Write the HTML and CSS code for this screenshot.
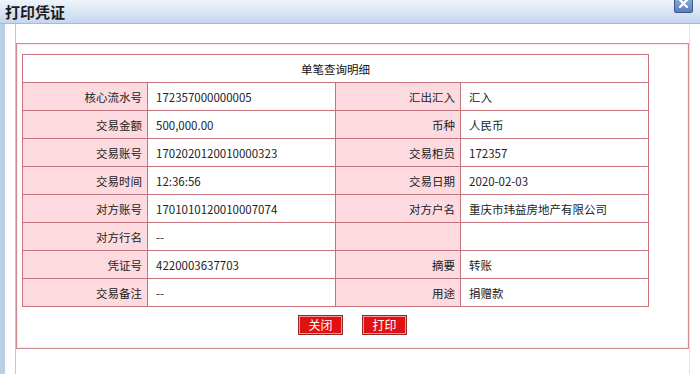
FILE: index.html
```html
<!DOCTYPE html>
<html lang="zh-CN">
<head>
    <meta charset="UTF-8">
    <title>打印凭证</title>
    <link rel="stylesheet" href="styles.css">
</head>
<body>
    <div class="dialog">
        <div class="titlebar">
            <span class="title">打印凭证</span>
            <span class="close-btn">
                <svg width="9" height="9" viewBox="0 0 9 9"><path d="M1 1L8 8M8 1L1 8" stroke="#fff" stroke-width="2.2" stroke-linecap="square"/></svg>
            </span>
        </div>
        <div class="main">
            <div class="side"></div>
            <div class="content">
                <div class="frame">
                    <div class="box">
                        <table class="detail">
                            <colgroup>
                                <col class="c-label"><col class="c-value"><col class="c-label"><col class="c-value">
                            </colgroup>
                            <tr><td colspan="4" class="head">单笔查询明细</td></tr>
                            <tr><td class="label">核心流水号</td><td>172357000000005</td><td class="label">汇出汇入</td><td>汇入</td></tr>
                            <tr><td class="label">交易金额</td><td>500,000.00</td><td class="label">币种</td><td>人民币</td></tr>
                            <tr><td class="label">交易账号</td><td>1702020120010000323</td><td class="label">交易柜员</td><td>172357</td></tr>
                            <tr><td class="label">交易时间</td><td>12:36:56</td><td class="label">交易日期</td><td>2020-02-03</td></tr>
                            <tr><td class="label">对方账号</td><td>1701010120010007074</td><td class="label">对方户名</td><td>重庆市玮益房地产有限公司</td></tr>
                            <tr><td class="label">对方行名</td><td>--</td><td class="label"></td><td></td></tr>
                            <tr><td class="label">凭证号</td><td>4220003637703</td><td class="label">摘要</td><td>转账</td></tr>
                            <tr><td class="label">交易备注</td><td>--</td><td class="label">用途</td><td>捐赠款</td></tr>
                        </table>
                        <div class="actions">
                            <button class="btn">关闭</button>
                            <button class="btn">打印</button>
                        </div>
                    </div>
                </div>
            </div>
        </div>
    </div>
</body>
</html>
```

FILE: styles.css
```css
body {
    margin: 0;
    background: #fff;
    font-family: 'Noto Sans CJK SC', 'Noto Sans', sans-serif;
    font-size: 11.5px;
    color: #222;
}

.dialog {
    width: 700px;
    height: 374px;
    overflow: hidden;
    display: flex;
    flex-direction: column;
}

.titlebar {
    height: 23px;
    border-bottom: 1px solid #a3bad8;
    background: linear-gradient(to bottom, #eef4fb, #dbe6f4 50%, #c4d6ee);
    display: flex;
    justify-content: space-between;
    align-items: center;
    padding: 0 7px 0 5px;
}

.title {
    font-size: 15px;
    font-weight: bold;
    color: #1b1b1b;
}

.close-btn {
    align-self: flex-start;
    width: 19px;
    height: 19px;
    margin-top: -6px;
    border: 1px solid #3b5a8c;
    border-radius: 2px;
    background: linear-gradient(to bottom, #9bb5de, #5b7fbd);
    display: flex;
    justify-content: center;
    align-items: flex-end;
    padding-bottom: 4px;
    box-sizing: border-box;
}

.main {
    flex: 1;
    display: flex;
}

.side {
    width: 5px;
    background: #bacee7;
}

.content {
    flex: 1;
    padding-left: 10px;
    padding-right: 10px;
}

.frame {
    height: 100%;
    border-left: 1px solid #c9c9c9;
    border-right: 1px solid #e2e2e2;
    padding-top: 19px;
}

.box {
    border: 1px solid #cf8d93;
    box-shadow: inset 0 0 0 1px #fbeaec;
    padding: 10px 0 13px 5px;
}

.detail {
    width: 627px;
    border-collapse: collapse;
    table-layout: fixed;
}

.c-label {
    width: 125px;
}

.c-value {
    width: 188px;
}

.detail td {
    height: 27px;
    padding: 0 8px;
    border: 1px solid #c6737b;
    background: #fff;
    white-space: nowrap;
}

.detail td.label {
    background: #fcdae0;
    text-align: right;
    padding: 0 5px 0 0;
}

.detail td.head {
    text-align: center;
    color: #111;
}

.actions {
    display: flex;
    justify-content: center;
    gap: 19px;
    margin-top: 8px;
    padding-right: 5px;
}

.btn {
    width: 45px;
    height: 20px;
    padding: 0;
    border: 1px solid #8c2a2a;
    box-shadow: inset 0 0 0 1px #f39a9a;
    background: #e2100f;
    color: #fff;
    font-family: 'Noto Sans CJK SC', sans-serif;
    font-size: 12px;
    line-height: 18px;
    cursor: pointer;
}
```
